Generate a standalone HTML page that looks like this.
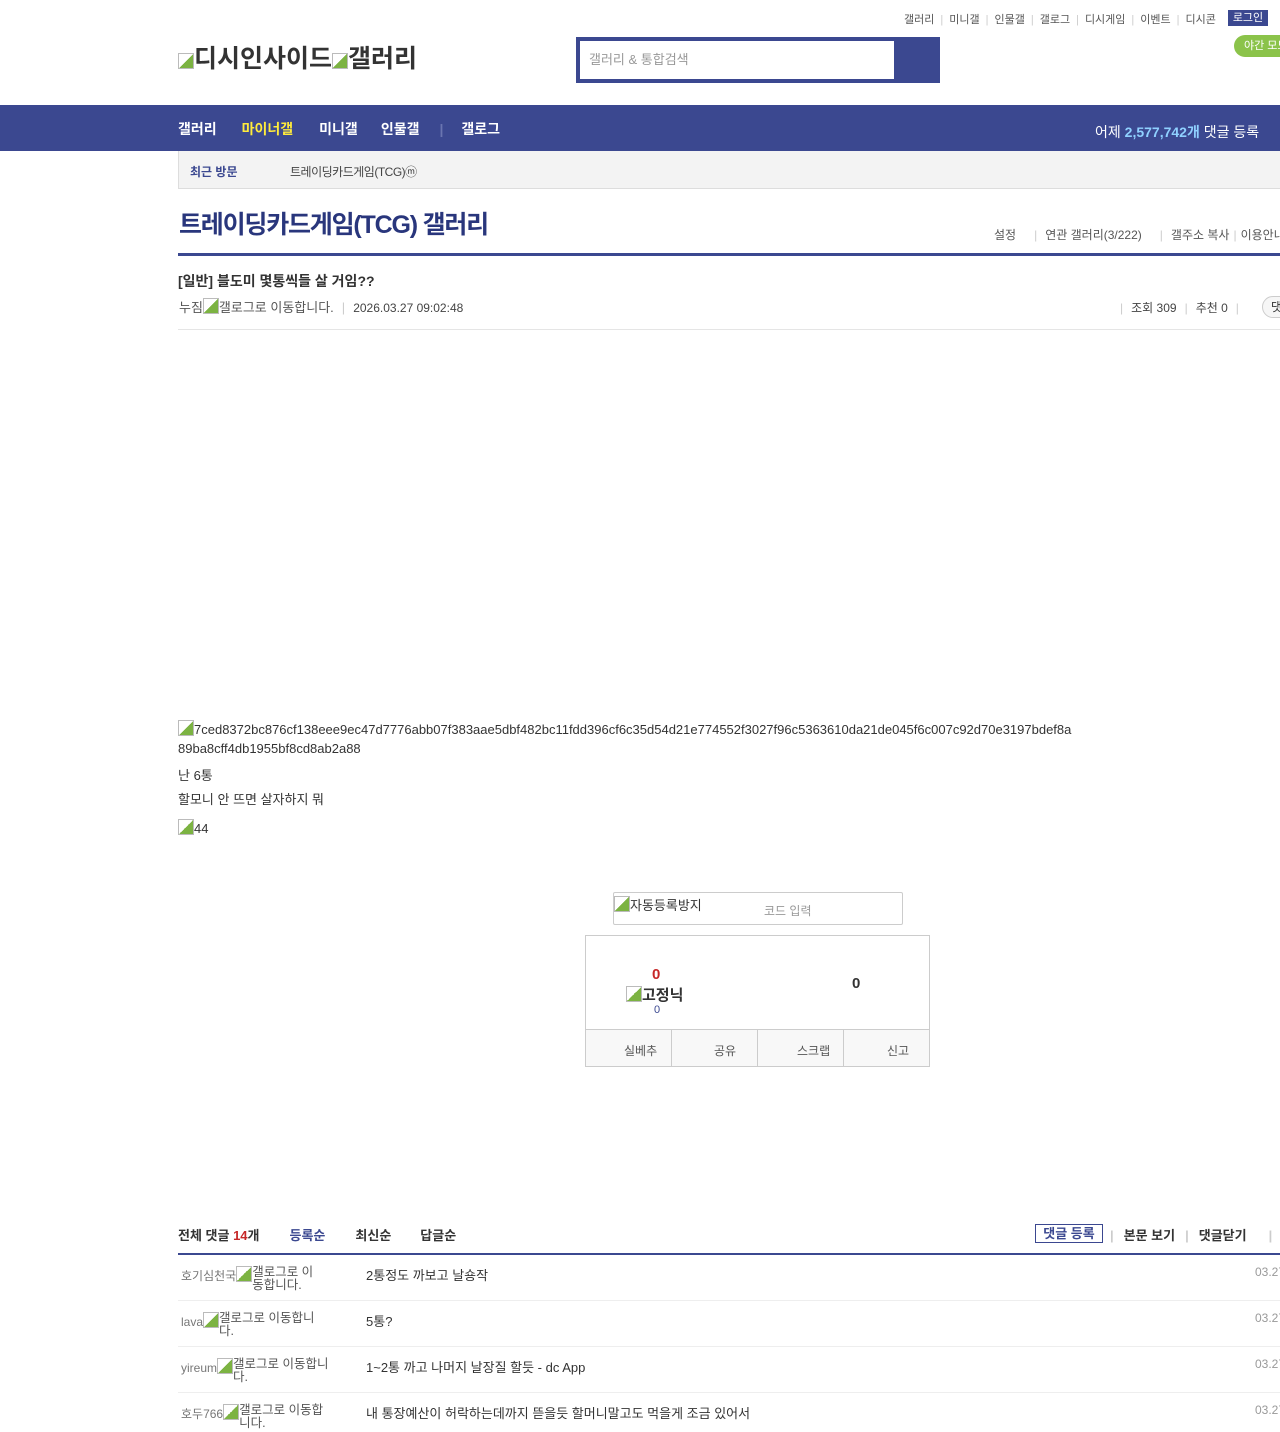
<!DOCTYPE html>
<html><head><meta charset="utf-8"><style>
*{margin:0;padding:0;box-sizing:border-box}
body{width:1280px;height:1432px;overflow:hidden;background:#fff;font-family:"Liberation Sans","Noto Sans CJK KR",sans-serif;color:#333;position:relative}
.a{position:absolute;white-space:nowrap}
.sep{color:#ccc;margin:0 4px}
.tl .sep{margin:0 6px}
.img{display:inline-block;width:16px;height:16px;border:1px solid #bbb;background:linear-gradient(135deg,#fff 50%,#7cb342 50%);vertical-align:-2px}
</style></head><body>
<div class="a tl" style="top:11px;left:904px;font-size:11px;color:#555">갤러리<span class="sep">|</span>미니갤<span class="sep">|</span>인물갤<span class="sep">|</span>갤로그<span class="sep">|</span>디시게임<span class="sep">|</span>이벤트<span class="sep">|</span>디시콘</div>
<div class="a" style="top:10px;left:1228px;width:40px;height:16px;background:#3b4890;color:#fff;font-size:11px;text-align:center;line-height:16px">로그인</div>
<div class="a" style="top:35px;left:1234px;width:60px;height:22px;background:#8bc34a;border-radius:11px;color:#fff;font-size:11px;line-height:22px;padding-left:10px">야간 모드</div>
<div class="a" style="top:39px;left:178px;font-size:25px;font-weight:bold;color:#333"><span class="img"></span>디시인사이드<span class="img"></span>갤러리</div>
<div class="a" style="top:37px;left:576px;width:364px;height:46px;background:#3b4890"></div>
<div class="a" style="top:41px;left:580px;width:314px;height:38px;background:#fff;font-size:13px;color:#999;line-height:38px;padding-left:9px">갤러리 &amp; 통합검색</div>
<div class="a" style="top:105px;left:0;width:1280px;height:46px;background:#3b4890"></div>
<div class="a" style="top:119px;left:178px;font-size:14px;font-weight:bold;color:#fff">갤러리<span style="color:#ffeb3b;margin-left:25px">마이너갤</span><span style="margin-left:26px">미니갤</span><span style="margin-left:23px">인물갤</span><span style="color:#6a75b0;margin:0 18px 0 20px">|</span>갤로그</div>
<div class="a" style="top:122px;left:1095px;font-size:14px;color:#fff">어제 <b style="color:#8fd0ff">2,577,742개</b> 댓글 등록</div>
<div class="a" style="top:151px;left:178px;width:1110px;height:38px;background:#f3f3f3;border:1px solid #ddd;border-top:0"></div>
<div class="a" style="top:163px;left:190px;font-size:12px;font-weight:bold;color:#3b4890">최근 방문</div>
<div class="a" style="top:163px;left:290px;font-size:12px;color:#444;letter-spacing:-0.5px">트레이딩카드게임(TCG)ⓜ</div>
<div class="a" style="top:205px;left:179px;font-size:25px;font-weight:bold;color:#29367c;letter-spacing:-1.2px">트레이딩카드게임(TCG) 갤러리</div>
<div class="a" style="top:226px;left:994px;font-size:12px;color:#555">설정<span class="sep" style="margin:0 8px 0 18px">|</span>연관 갤러리(3/222)<span class="sep" style="margin:0 8px 0 18px">|</span>갤주소 복사<span class="sep">|</span>이용안내</div>
<div class="a" style="top:253px;left:178px;width:1110px;height:3px;background:#3b4890"></div>
<div class="a" style="top:271px;left:178px;font-size:14px;font-weight:bold;color:#333">[일반] 블도미 몇통씩들 살 거임??</div>
<div class="a" style="top:297px;left:179px;font-size:13px;color:#555">누짐<span class="img"></span>갤로그로 이동합니다.<span class="sep" style="margin:0 8px">|</span><span style="font-size:12px;color:#444">2026.03.27 09:02:48</span></div>
<div class="a" style="top:299px;left:1120px;font-size:12px;color:#444"><span class="sep" style="margin:0 8px 0 0">|</span>조회 309<span class="sep" style="margin:0 8px">|</span>추천 0<span class="sep" style="margin:0 8px">|</span></div>
<div class="a" style="top:296px;left:1262px;width:40px;height:22px;border:1px solid #ccc;border-radius:11px;background:#f6f6f6;font-size:12px;line-height:20px;padding-left:8px">댓글</div>
<div class="a" style="top:329px;left:178px;width:1110px;height:1px;background:#e5e5e5"></div>
<div class="a" style="top:720px;left:178px;font-size:13px;color:#333;line-height:19px;white-space:normal;width:900px;word-break:break-all"><span class="img"></span>7ced8372bc876cf138eee9ec47d7776abb07f383aae5dbf482bc11fdd396cf6c35d54d21e774552f3027f96c5363610da21de045f6c007c92d70e3197bdef8a89ba8cff4db1955bf8cd8ab2a88</div>
<div class="a" style="top:765px;left:178px;font-size:13px">난 6통</div>
<div class="a" style="top:789px;left:178px;font-size:13px">할모니 안 뜨면 살자하지 뭐</div>
<div class="a" style="top:819px;left:178px;font-size:13px"><span class="img"></span>44</div>
<div class="a" style="top:892px;left:613px;width:290px;height:33px;border:1px solid #ccc;border-radius:2px"></div>
<div class="a" style="top:895px;left:614px;font-size:13px"><span class="img"></span>자동등록방지</div>
<div class="a" style="top:902px;left:764px;font-size:12px;color:#999">코드 입력</div>
<div class="a" style="top:935px;left:585px;width:345px;height:132px;border:1px solid #ccc"></div>
<div class="a" style="top:1029px;left:586px;width:343px;height:37px;background:#f8f8f8;border-top:1px solid #ccc"></div>
<div class="a" style="top:1030px;left:671px;width:1px;height:36px;background:#ccc"></div>
<div class="a" style="top:1030px;left:757px;width:1px;height:36px;background:#ccc"></div>
<div class="a" style="top:1030px;left:843px;width:1px;height:36px;background:#ccc"></div>
<div class="a" style="top:1042px;left:624px;font-size:12px;color:#555">실베추</div>
<div class="a" style="top:1042px;left:714px;font-size:12px;color:#555">공유</div>
<div class="a" style="top:1042px;left:797px;font-size:12px;color:#555">스크랩</div>
<div class="a" style="top:1042px;left:887px;font-size:12px;color:#555">신고</div>
<div class="a" style="top:966px;left:652px;font-size:15px;font-weight:bold;color:#c62828">0</div>
<div class="a" style="top:984px;left:626px;font-size:15px;font-weight:bold;color:#333"><span class="img"></span>고정닉</div>
<div class="a" style="top:1004px;left:654px;font-size:11px;color:#3b4890">0</div>
<div class="a" style="top:975px;left:852px;font-size:15px;font-weight:bold;color:#333">0</div>
<div class="a" style="top:1225px;left:178px;font-size:13px;font-weight:bold;color:#333">전체 댓글 <span style="color:#c62828">14</span>개<span style="color:#3b4890;margin-left:30px">등록순</span><span style="margin-left:30px">최신순</span><span style="margin-left:29px">답글순</span></div>
<div class="a" style="top:1224px;left:1035px;width:68px;height:19px;border:1px solid #3b4890;font-size:13px;font-weight:bold;color:#3b4890;text-align:center;line-height:17px">댓글 등록</div>
<div class="a" style="top:1225px;left:1110px;font-size:13px;font-weight:bold;color:#333"><span class="sep" style="margin:0 10px 0 0">|</span>본문 보기<span class="sep" style="margin:0 10px">|</span>댓글닫기<span class="sep" style="margin:0 8px 0 22px">|</span></div>
<div class="a" style="top:1253px;left:178px;width:1110px;height:2px;background:#3b4890"></div>
<div class="a" style="top:1300px;left:178px;width:1110px;height:1px;background:#eee"></div>
<div class="a" style="top:1346px;left:178px;width:1110px;height:1px;background:#eee"></div>
<div class="a" style="top:1392px;left:178px;width:1110px;height:1px;background:#eee"></div>
<div class="a" style="top:1266px;left:181px;font-size:12px;color:#777;line-height:13px">호기심천국<span class="img"></span><span style="display:inline-block;width:72px;white-space:normal;vertical-align:top;color:#555;font-size:12.5px">갤로그로 이동합니다.</span></div>
<div class="a" style="top:1312px;left:181px;font-size:12px;color:#777;line-height:13px">lava<span class="img"></span><span style="display:inline-block;width:108px;white-space:normal;vertical-align:top;color:#555;font-size:12.5px">갤로그로 이동합니다.</span></div>
<div class="a" style="top:1358px;left:181px;font-size:12px;color:#777;line-height:13px">yireum<span class="img"></span><span style="display:inline-block;width:96px;white-space:normal;vertical-align:top;color:#555;font-size:12.5px">갤로그로 이동합니다.</span></div>
<div class="a" style="top:1404px;left:181px;font-size:12px;color:#777;line-height:13px">호두766<span class="img"></span><span style="display:inline-block;width:84px;white-space:normal;vertical-align:top;color:#555;font-size:12.5px">갤로그로 이동합니다.</span></div>
<div class="a" style="top:1265px;left:366px;font-size:13px">2통정도 까보고 날숑작</div>
<div class="a" style="top:1311px;left:366px;font-size:13px">5통?</div>
<div class="a" style="top:1357px;left:366px;font-size:13px">1~2통 까고 나머지 날장질 할듯 - dc App</div>
<div class="a" style="top:1403px;left:366px;font-size:13px">내 통장예산이 허락하는데까지 뜯을듯 할머니말고도 먹을게 조금 있어서</div>
<div class="a" style="top:1265px;left:1255px;font-size:12px;color:#999">03.27</div>
<div class="a" style="top:1311px;left:1255px;font-size:12px;color:#999">03.27</div>
<div class="a" style="top:1357px;left:1255px;font-size:12px;color:#999">03.27</div>
<div class="a" style="top:1403px;left:1255px;font-size:12px;color:#999">03.27</div>
</body></html>
